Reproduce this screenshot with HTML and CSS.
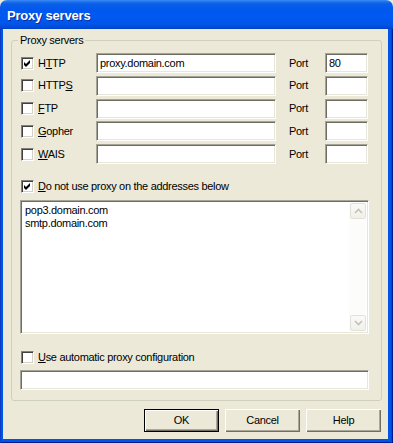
FILE: index.html
```html
<!DOCTYPE html>
<html>
<head>
<meta charset="utf-8">
<title>Proxy servers</title>
<link rel="stylesheet" href="styles.css">
</head>
<body>
<div class="window">
  <div class="titlebar"><span class="title">Proxy servers</span></div>
  <div class="frame">
    <div class="client">
      <div class="group">
        <div class="group-title">Proxy servers</div>
        <div class="proto-grid">
          <div class="proto"><span class="checkbox checked"><svg width="7" height="7" viewBox="0 0 7 7"><path d="M0 2 L2 4 L6 0 L6 3 L2 7 L0 5 Z" fill="#000"/></svg></span><span>H<u>T</u>TP</span></div>
          <div class="textbox"><span class="value">proxy.domain.com</span></div>
          <div class="port-label">Port</div>
          <div class="textbox"><span class="value">80</span></div>

          <div class="proto"><span class="checkbox"></span><span>HTTP<u>S</u></span></div>
          <div class="textbox"></div>
          <div class="port-label">Port</div>
          <div class="textbox"></div>

          <div class="proto"><span class="checkbox"></span><span><u>F</u>TP</span></div>
          <div class="textbox"></div>
          <div class="port-label">Port</div>
          <div class="textbox"></div>

          <div class="proto"><span class="checkbox"></span><span><u>G</u>opher</span></div>
          <div class="textbox"></div>
          <div class="port-label">Port</div>
          <div class="textbox"></div>

          <div class="proto"><span class="checkbox"></span><span><u>W</u>AIS</span></div>
          <div class="textbox"></div>
          <div class="port-label">Port</div>
          <div class="textbox"></div>
        </div>

        <div class="check-row bypass-row"><span class="checkbox checked"><svg width="7" height="7" viewBox="0 0 7 7"><path d="M0 2 L2 4 L6 0 L6 3 L2 7 L0 5 Z" fill="#000"/></svg></span><span><u>D</u>o not use proxy on the addresses below</span></div>

        <div class="listbox">
          <div class="list-text">pop3.domain.com<br>smtp.domain.com</div>
          <div class="vscroll">
            <div class="sbtn"><svg width="9" height="6" viewBox="0 0 9 6"><path d="M1 5 L4.5 1.5 L8 5" fill="none" stroke="#C4C2B6" stroke-width="1.6"/></svg></div>
            <div class="strack"></div>
            <div class="sbtn"><svg width="9" height="6" viewBox="0 0 9 6"><path d="M1 1 L4.5 4.5 L8 1" fill="none" stroke="#C4C2B6" stroke-width="1.6"/></svg></div>
          </div>
        </div>

        <div class="check-row auto-row"><span class="checkbox"></span><span><u>U</u>se automatic proxy configuration</span></div>
        <div class="textbox wide"></div>
      </div>

      <div class="buttons">
        <div class="btn default">OK</div>
        <div class="btn">Cancel</div>
        <div class="btn">Help</div>
      </div>
    </div>
  </div>
</div>
</body>
</html>
```

FILE: styles.css
```css
* { box-sizing: border-box; }

body {
  margin: 0;
  background: #ECE9D8;
  font-family: "Liberation Sans", Arial, sans-serif;
  font-size: 11px;
  line-height: 13px;
  letter-spacing: -0.3px;
  color: #000;
}

.window {
  width: 393px;
  height: 443px;
  display: flex;
  flex-direction: column;
}

.titlebar {
  height: 29px;
  border-radius: 7px 7px 0 0;
  background: linear-gradient(to bottom,
    #3D8DF5 0px, #1A6EEE 2px, #0A5EE6 4px, #0058EE 10px,
    #0059F2 18px, #0053E6 25px, #0048D2 28px, #003DB8 29px);
  display: flex;
  align-items: center;
  padding: 2px 0 0 7px;
}

.title {
  color: #fff;
  font-weight: bold;
  font-size: 13px;
  letter-spacing: -0.2px;
  text-shadow: 1px 1px #0B2F9A;
}

.frame {
  flex: 1;
  display: flex;
  background: #0055E5;
  padding: 0 5px 4px 3px;
  box-shadow: inset 1px 0 #0A3FC4, inset -1px 0 #00188F, inset -2px 0 #0046C9, inset 0 -1px #00188F;
}

.client {
  flex: 1;
  background: #ECE9D8;
  padding: 11px 0 0 8px;
  display: flex;
  flex-direction: column;
}

.group {
  width: 371px;
  border: 1px solid #D0D0BF;
  border-radius: 3px;
  padding: 0 11px 10px 8px;
}

.group-title {
  display: table;
  margin: -7px 0 0 -2px;
  padding: 0 2px;
  background: #ECE9D8;
  color: #000;
}

.proto-grid {
  margin-top: 6px;
  display: grid;
  grid-template-columns: 76px 180px 49px 43px;
  grid-auto-rows: 20px;
  row-gap: 2.75px;
  align-items: center;
}

.proto {
  display: flex;
  align-items: center;
  gap: 4px;
  padding-left: 1px;
}

.port-label {
  padding-left: 13px;
}

.checkbox {
  width: 13px;
  height: 13px;
  flex: none;
  background: #fff;
  border: 1px solid;
  border-color: #808080 #fff #fff #808080;
  box-shadow: inset 1px 1px #404040, inset -1px -1px #D4D0C8;
  display: flex;
  align-items: center;
  justify-content: center;
}

.checkbox svg { display: block; }

.textbox {
  height: 20px;
  background: #fff;
  border: 1px solid;
  border-color: #A5A396 #fff #fff #A5A396;
  box-shadow: inset 1px 1px #6F6D62, inset -1px -1px #E8E6DA;
  padding: 0 3px;
  display: flex;
  align-items: center;
}

.check-row {
  display: flex;
  align-items: center;
  gap: 4px;
  height: 13px;
  padding-left: 1px;
}

.bypass-row { margin-top: 16px; }
.auto-row { margin-top: 17px; }

.listbox {
  margin-top: 7px;
  width: 349px;
  height: 134px;
  background: #fff;
  border: 1px solid;
  border-color: #A5A396 #fff #fff #A5A396;
  box-shadow: inset 1px 1px #6F6D62, inset -1px -1px #E8E6DA;
  padding: 2px 2px 2px 2px;
  display: flex;
}

.list-text {
  flex: 1;
  padding: 1px 0 0 2px;
}

.vscroll {
  width: 17px;
  display: flex;
  flex-direction: column;
  background: #FCFCFA;
}

.sbtn {
  width: 16px;
  height: 16px;
  margin-left: 1px;
  border: 1px solid #E3E2DA;
  border-radius: 2px;
  background: linear-gradient(#FAFAF8, #F1F0EA);
  display: flex;
  align-items: center;
  justify-content: center;
}

.strack { flex: 1; }

.textbox.wide {
  margin-top: 6px;
  width: 349px;
}

.buttons {
  margin-top: 8px;
  width: 370px;
  display: flex;
  justify-content: flex-end;
  gap: 6px;
}

.btn {
  width: 75px;
  height: 23px;
  display: flex;
  align-items: center;
  justify-content: center;
  background: #ECE9D8;
  box-shadow: inset 1px 1px #fff, inset -1px -1px #716F64, inset -2px -2px #ACA899;
}

.btn.default {
  border: 1px solid #000;
}
```
